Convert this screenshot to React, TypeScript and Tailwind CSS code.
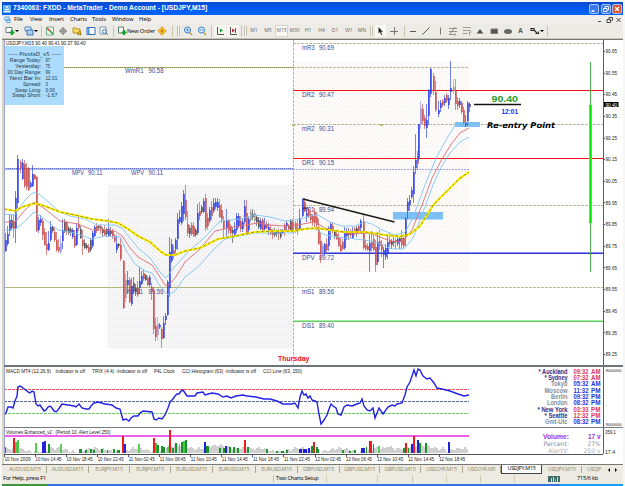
import React from "react";

const SANS = '"Liberation Sans", Arial, sans-serif';
const NARROW = '"Liberation Sans Narrow", "Liberation Sans", Arial, sans-serif';
const UI = '"Open Sans", "Noto Sans", sans-serif';
const WIDE = '"DejaVu Sans", Verdana, sans-serif';

type LabelProps = {
  x: number;
  y: number;
  w: number;
  s: number;
  c?: string;
  f?: string;
  b?: boolean;
  i?: boolean;
  end?: boolean;
  children: string;
};

/** Chart label whose advance is fixed to w pixels. */
function Label({ x, y, w, s, c = "#33334d", f = UI, b, i, end, children }: LabelProps) {
  return (
    <text
      x={end ? x - w : x}
      y={y}
      fontSize={s}
      fill={c}
      textLength={w}
      lengthAdjust="spacingAndGlyphs"
      fontFamily={f}
      fontWeight={b ? 700 : 400}
      fontStyle={i ? "italic" : "normal"}
    >
      {children}
    </text>
  );
}

/* x, high, low, body top, body bottom, colour key */
const CANDLES = `
5 233 252 240 251 b;7 226 246 234 244 b;9 215 236 220 231 b;11 215 230 220 228 k;13 214 238 221 229 r;15 191 243 198 228 b;
17 155 209 159 203 b;20 160 173 162 168 r;22 159 180 163 179 b;24 160 188 164 186 r;26 163 190 168 187 r;28 167 191 168 190 r;30 181 188 183 187 b;32 165 187 174 186 b;34 174 180 175 179 r;36 176 232 177 231 r;
38 217 233 220 230 b;40 215 226 219 223 b;42 218 240 221 235 r;44 228 246 232 245 r;46 232 255 244 250 r;48 231 251 243 250 b;50 221 242 227 240 b;52 225 233 227 231 k;54 228 242 232 240 r;56 232 252 240 250 r;58 239 253 247 251 r;60 236 254 243 252 l;62 219 249 230 241 b;
64 219 233 222 232 k;66 221 235 222 231 r;68 226 235 228 233 k;70 227 236 229 233 k;72 228 239 230 237 b;74 230 248 236 246 r;76 223 246 228 245 b;78 216 231 224 228 r;80 226 239 229 238 k;82 230 255 240 246 r;84 239 249 243 248 k;86 243 250 245 248 k;88 244 253 247 252 r;90 238 252 240 250 k;
92 231 248 233 246 b;94 225 237 227 236 b;96 223 233 226 231 r;98 225 230 226 228 k;100 224 234 226 229 r;102 227 237 229 233 k;104 225 236 230 235 r;106 228 237 229 234 k;108 219 237 229 236 b;110 227 236 231 234 k;112 229 239 231 237 r;114 234 243 237 241 r;116 235 253 244 250 b;118 243 248 244 246 k;120 238 261 245 259 r;
123 260 309 261 308 r;125 274 302 280 298 g;127 271 293 280 285 b;129 277 303 280 302 r;131 278 306 286 304 b;133 277 294 283 291 k;135 284 296 288 292 k;137 281 297 288 295 r;139 267 294 281 288 b;141 271 285 276 284 b;143 269 281 273 279 r;145 274 281 275 280 k;147 276 286 278 285 r;149 275 287 277 285 b;151 283 300 287 292 r;153 287 334 291 329 r;155 318 341 326 337 r;157 317 340 324 335 l;
159 323 329 325 327 b;161 327 348 329 339 r;163 316 339 323 338 b;165 313 325 316 320 b;167 280 316 282 315 b;169 237 297 252 288 b;171 239 263 244 261 b;173 245 259 250 254 r;175 238 253 240 249 b;177 213 250 219 239 b;179 210 224 217 222 b;181 202 225 206 223 b;183 190 221 194 214 b;185 185 220 200 217 r;187 211 236 224 233 r;189 225 238 228 234 k;
191 222 236 225 234 r;193 222 237 226 236 r;195 228 237 230 235 k;197 204 235 213 233 b;199 202 220 211 216 r;201 205 214 207 212 k;203 198 213 201 212 b;205 194 231 198 228 r;207 213 230 218 226 r;209 207 223 210 221 b;211 201 220 207 216 r;213 198 213 203 211 b;215 198 209 202 207 b;217 198 211 202 208 b;219 199 218 205 217 r;221 204 223 210 219 r;223 216 238 220 229 r;
226 209 237 220 228 b;228 219 234 220 231 r;230 224 236 226 233 r;232 228 243 230 233 k;234 222 237 229 236 b;236 213 233 216 230 b;238 213 228 216 226 b;240 216 232 221 229 r;242 219 232 222 229 b;244 200 224 206 222 b;246 200 234 213 233 r;248 217 233 219 230 b;250 209 222 212 220 g;252 209 220 214 217 k;254 210 224 213 221 g;256 215 226 217 222 k;
258 217 229 220 227 k;260 218 230 221 229 b;262 218 232 220 230 r;264 218 231 225 229 b;266 221 229 224 228 r;268 223 235 227 232 b;270 225 235 229 234 r;272 229 239 231 235 r;274 228 237 230 235 k;276 230 237 231 234 k;278 229 240 231 234 r;280 229 239 231 237 k;282 229 234 230 233 b;284 223 236 225 232 r;286 221 232 223 226 b;288 224 231 226 229 r;290 219 231 221 230 k;292 219 231 222 229 r;
295 221 233 223 231 r;297 220 235 228 231 r;299 209 231 218 230 b;302 198 217 200 216 b;304 198 212 202 211 r;306 209 222 213 217 b;308 208 218 210 216 r;310 210 223 214 220 r;312 214 226 216 222 r;314 208 228 212 223 r;316 212 230 217 225 r;318 219 245 227 244 r;320 233 263 241 254 r;322 243 257 246 255 l;324 243 255 244 252 b;326 238 252 244 250 r;328 226 251 228 246 b;330 222 240 224 230 b;
332 222 234 226 231 r;334 230 239 231 236 k;336 232 240 234 239 r;338 233 247 238 246 r;340 237 252 245 251 r;342 239 250 242 249 r;344 227 250 231 248 b;346 228 240 232 236 b;348 228 240 231 235 k;350 229 238 231 235 r;352 227 239 231 238 b;354 227 235 229 233 r;356 226 237 228 231 k;358 225 233 226 231 r;360 219 231 221 228 b;363 213 250 221 248 r;365 240 251 245 249 r;367 243 251 246 250 r;369 233 272 243 251 b;371 231 251 241 248 r;373 235 251 239 250 r;
375 240 272 247 265 r;377 232 265 242 262 b;379 230 250 241 246 r;381 240 257 244 250 r;383 247 268 250 255 b;385 244 260 248 257 b;387 235 259 242 254 b;389 233 247 240 244 r;391 239 249 241 245 k;393 235 247 241 243 k;395 238 249 240 242 r;397 235 246 239 244 b;399 237 249 238 242 k;401 230 249 238 245 r;403 234 248 238 246 r;405 217 246 219 237 b;407 198 219 202 211 b;409 195 211 200 205 b;411 187 199 190 197 b;413 166 203 172 194 b;415 134 174 160 168 b;
417 151 170 156 164 r;418 124 161 124 159 b;420 101 129 108 124 l;422 104 124 109 121 r;424 115 129 118 126 r;426 104 138 120 128 b;428 89 125 90 116 b;430 68 97 69 94 b;433 73 95 76 91 r;435 81 112 92 110 r;438 101 117 110 114 b;440 100 112 103 108 b;442 99 107 101 105 r;444 95 106 98 103 b;446 93 103 95 101 r;448 95 109 98 105 b;450 61 100 88 92 b;453 79 94 87 91 g;455 79 110 91 104 r;457 97 110 101 106 r;459 98 108 101 105 b;461 101 114 103 112 r;463 107 125 110 123 r;465 115 127 122 125 b;467 101 126 103 121 b;469 102 112 104 107 k`
  .trim()
  .split(";")
  .map((row) => {
    const p = row.trim().split(" ");
    return { x: +p[0], h: +p[1], l: +p[2], t: +p[3], b: +p[4], c: p[5] };
  });

const CANDLE_COLORS: Record<string, string> = {
  b: "#2a3fe8",
  r: "#c84b4b",
  k: "#4c4850",
  g: "#9a9a94",
  l: "#9393ef",
};

const UPPER =
  "4,214 15,215 25,200 31,194 36,192 45,199 60,212 70,216 85,219 97,225 115,225 122,228 130,238 138,248 150,258 160,272 166,278 175,266 190,250 205,237 220,221 232,220 240,219 255,215 270,217 285,221 300,219 310,216 318,215 330,222 342,226 355,226 364,222 372,224 382,230 395,235 405,232 412,220 418,204 425,185 436,158 446,140 455,125 469,122";
const MIDDLE =
  "4,222 15,222 25,210 34,202 45,209 60,221 78,224 92,230 105,230 115,231 122,236 130,248 138,257 152,265 158,274 165,285 168,286 175,278 185,262 200,249 215,231 228,228 240,226 258,223 270,225 285,226 298,225 308,223 315,222 325,228 340,232 350,234 370,233 382,238 395,242 403,241 412,230 422,205 432,178 442,159 452,143 460,133 469,128";
const LOWER =
  "4,230 15,230 25,221 34,212 42,217 58,230 75,233 92,239 105,236 120,237 126,250 135,264 145,271 152,273 160,286 168,295 175,291 185,277 198,267 213,250 225,239 240,236 255,233 275,233 290,233 308,228 315,229 325,235 345,238 365,240 378,243 392,249 404,249 413,238 420,220 426,204 433,185 440,169 450,153 460,142 469,137";
const SLOW =
  "4,209 15,211 22,207 34,203.5 42,205 60,212 75,215 92,219 108,221 118,223 128,229 138,236 150,242 160,251 166,255 175,255 185,251 200,248 218,239 235,236 255,232 275,231 293,231 305,229 315,228 330,230 345,232 365,232 385,235 400,236.5 410,234 420,226 434,204 448,190 459,179 469,172";

const PIVOTS: { y: number; t: string; v: string }[] = [
  { y: 49.5, t: "mR3", v: "90.69" },
  { y: 97, t: "DR2", v: "90.47" },
  { y: 131, t: "mR2", v: "90.31" },
  { y: 165, t: "DR1", v: "90.15" },
  { y: 212, t: "mP1", v: "89.94" },
  { y: 259.5, t: "DPV", v: "89.72" },
  { y: 293.5, t: "mS1", v: "89.56" },
  { y: 327.5, t: "DS1", v: "89.40" },
];

const INFO: [string, string][] = [
  ["Range Today:", "97"],
  ["Yesterday:", "75"],
  ["30 Day Range:", "99"],
  ["Next Bar In:", "12.01"],
  ["Spread:", "3"],
  ["Swap Long:", "0.00"],
  ["Swap Short:", "-1.67"],
];

function PriceChart() {
  return (
    <g>
      <defs>
        <pattern id="session" width="4" height="4" patternUnits="userSpaceOnUse">
          <rect width="4" height="4" fill="#f8f7f7" />
          <rect x="0" y="1" width="1" height="1" fill="#e4e2e6" />
          <rect x="2" y="3" width="1" height="1" fill="#e4e2e6" />
        </pattern>
        <pattern id="today" width="5" height="5" patternUnits="userSpaceOnUse">
          <rect width="5" height="5" fill="#fcfbfa" />
          <rect x="1" y="1" width="1" height="1" fill="#f2ebe6" />
          <rect x="3" y="3" width="1" height="1" fill="#f4f0ec" />
        </pattern>
      </defs>
      <rect x="108" y="185" width="185" height="163" fill="url(#session)" />
      <rect x="293" y="62" width="176" height="210" fill="url(#today)" />

      {/* pivot levels */}
      <g shapeRendering="crispEdges" fill="none">
        <path d="M4 67.5H293M4 287.5H293" stroke="#b5b57c" />
        <path d="M4 67.5H293" stroke="#8f8f4a" strokeDasharray="1 1" />
        <path
          d="M293 43.5H603M293 67.5H469M293 124.5H603M293 205.5H603M293 287.5H603M293.5 40V365"
          stroke="#bcbc90"
          strokeDasharray="3 1"
        />
        <path d="M4 169H293" stroke="#a9b5f5" strokeWidth="2" />
        <path d="M4 168.5H293" stroke="#6470c0" strokeDasharray="1 1" />
        <path d="M293 169.5H469" stroke="#9fa8ee" strokeDasharray="2 1" />
        <path d="M293 90.5H603M293 158.5H603" stroke="#f01414" />
        <path d="M293 252.5H603" stroke="#8d95f0" />
        <path d="M293 253.5H603" stroke="#3333d0" />
        <path d="M293 320.5H603" stroke="#a8eaa8" />
        <path d="M293 321.5H603" stroke="#62cc62" />
        <path d="M292 124h2v1h-2zM380 124h2v1h-2z" stroke="#b9b97e" />
      </g>
      <rect x="393" y="212" width="50" height="7.5" fill="#7cc0f6" />
      <rect x="455" y="122" width="25" height="5" fill="#7cc0f6" />

      {/* level names */}
      {PIVOTS.map((p) => (
        <g key={p.t}>
          <Label x={302} y={p.y} w={12.5} s={6.4} c="#3d4698" f={SANS}>{p.t}</Label>
          <Label x={319} y={p.y} w={15} s={6.4} c="#3d4698" f={SANS}>{p.v}</Label>
        </g>
      ))}
      <Label x={125} y={73} w={18.5} s={6.4} c="#3d4698" f={SANS}>WmR1</Label>
      <Label x={148.5} y={73} w={15} s={6.4} c="#3d4698" f={SANS}>90.58</Label>
      <Label x={72} y={175} w={12} s={6.4} c="#3d4698" f={SANS}>MPV</Label>
      <Label x={88} y={175} w={14.5} s={6.4} c="#3d4698" f={SANS}>90.11</Label>
      <Label x={131} y={175} w={13} s={6.4} c="#3d4698" f={SANS}>WPV</Label>
      <Label x={148.5} y={175} w={14.5} s={6.4} c="#3d4698" f={SANS}>90.11</Label>
      <Label x={126} y={293.5} w={17} s={6.4} c="#3d4698" f={SANS}>WmS1</Label>
      <Label x={148.5} y={293.5} w={15} s={6.4} c="#3d4698" f={SANS}>89.56</Label>

      {/* candles */}
      <g shapeRendering="crispEdges">
        {CANDLES.map((k) => (
          <g key={k.x} fill={CANDLE_COLORS[k.c]}>
            <rect x={k.x} y={k.h} width={1} height={k.l - k.h} fillOpacity={0.65} />
            <rect x={k.x} y={k.t} width={2} height={Math.max(1, k.b - k.t)} fillOpacity={0.72} />
          </g>
        ))}
      </g>

      {/* moving averages */}
      <g fill="none" strokeLinejoin="round">
        <polyline points={UPPER} stroke="#7fc4f4" strokeWidth="0.9" />
        <polyline points={LOWER} stroke="#7fc4f4" strokeWidth="0.9" />
        <polyline points={MIDDLE} stroke="#e06a72" strokeWidth="0.9" />
        <polyline points={SLOW} stroke="#fff000" strokeWidth="2.2" />
        <polyline points={SLOW} stroke="#77701a" strokeWidth="0.7" strokeDasharray="3 2" />
        <path d="M303 199L394.5 222" stroke="#1b1b1b" strokeWidth="1.3" />
        <path d="M303 208h5" stroke="#1b1b1b" />
      </g>

      {/* price tags */}
      <path d="M474 104.5H521" stroke="#111" strokeWidth="1.4" />
      <Label x={491.5} y={102} w={26.5} s={9.6} c="#2a9a2a" b f={SANS}>90.40</Label>
      <Label x={501.5} y={113.5} w={16.5} s={6.8} c="#2424e8" b f={SANS}>12:01</Label>
      <Label x={487} y={127.5} w={68} s={7.8} c="#000" b i f={WIDE}>Re-entry Point</Label>
      <Label x={278} y={361} w={31.5} s={6.4} c="#f01020" b f={SANS}>Thursday</Label>
      <g shapeRendering="crispEdges">
        <rect x="590" y="62" width="1" height="210" fill="#4eaa4e" />
        <rect x="589" y="105" width="3" height="118" fill="#44f044" />
        <rect x="590" y="105" width="1" height="118" fill="#00e400" />
      </g>

      {/* status text and indicator box */}
      <rect x="5" y="46" width="59" height="59" fill="#abdcfc" />
      <Label x={6} y={45.3} w={79.5} s={5.6} c="#111" f={NARROW}>USDJPY,M15 90.40 90.41 90.37 90.40</Label>
      <Label x={7.5} y={56.3} w={54} s={5.4} c="#22384c" f={WIDE}>----- PivotsD_v5 -----</Label>
      {INFO.map(([name, value], n) => {
        const width = name.length * 2.65;
        return (
          <g key={name}>
            <Label x={41.5} y={62.3 + n * 5.85} w={width} s={5.2} c="#22384c" f={SANS} end>{name}</Label>
            <Label x={45.5} y={62.3 + n * 5.85} w={value.length * 2.35} s={5.2} c="#22384c" f={SANS}>{value}</Label>
          </g>
        );
      })}
    </g>
  );
}

const OSC =
  "4,415 6,413 8,407 11,407 13,408 15,401 17,396 18,387 20,386 22,387 24,389 26,390 28,392 30,393 32,391 34,392 36,404 38,406 40,405 42,408 44,411 46,410 48,407 50,406 52,408 54,411 56,412 58,410 60,407 62,404 68,405 74,406 76,407 79,404 82,408 86,409 89,409 91,406 94,403 98,402 105,404 112,405 116,408 120,409 123,420 126,419 129,421 131,418 134,416 138,416 140,413 143,411 152,412 154,419 156,420 159,418 162,419 165,415 168,408 170,402 173,399 175,396 177,394 179,394 181,391 183,390 185,393 187,396 195,396 197,393 203,392 205,395 212,393 218,394 223,397 227,396 231,398 236,396 243,395 247,396 256,397 264,399 270,399 277,401 283,404 292,404 295,403 298,408 300,397 302,391 304,395 306,394 308,398 310,396 312,400 315,401 317,402 319,414 321,424 324,420 327,415 329,409 331,404 333,406 336,408 338,414 341,415 344,407 347,405 352,406 357,404 360,403 362,399 364,406 367,410 370,411 373,408 375,418 379,408 383,414 388,407 392,405 395,406 397,404 402,403 405,395 407,387 410,382 413,373 414,370 416,376 418,369 420,370 423,376 427,379 430,378 434,383 437,388 442,389 450,391 458,394 464,396 469,395";

const CLOCKS: { city: string; time: string; half: string; w: number; red?: boolean }[] = [
  { city: "* Auckland", time: "09:32", half: "AM", w: 29, red: true },
  { city: "* Sydney", time: "07:32", half: "AM", w: 23, red: true },
  { city: "Tokyo", time: "05:32", half: "AM", w: 16.5 },
  { city: "Moscow", time: "11:32", half: "PM", w: 23 },
  { city: "Berlin", time: "09:32", half: "PM", w: 16.5 },
  { city: "London", time: "08:32", half: "PM", w: 20.5 },
  { city: "* New York", time: "03:33", half: "PM", w: 30, red: true },
  { city: "* Seattle", time: "12:32", half: "PM", w: 23, red: true },
  { city: "Gmt-Utc", time: "08:32", half: "PM", w: 22.5 },
];

function Oscillator() {
  return (
    <g>
      <g fill="none" shapeRendering="crispEdges" strokeDasharray="3 1">
        <path d="M4 389.5H469" stroke="#e0505c" />
        <path d="M4 401.5H469" stroke="#5c6c98" />
        <path d="M4 413.5H469" stroke="#74c874" />
      </g>
      <polyline points={OSC} fill="none" stroke="#2222e4" strokeWidth="1.4" />
      <Label x={6} y={373} w={45} s={5.2} c="#222" f={NARROW}>MACD MT4 (12,26,9)</Label>
      <Label x={55.5} y={373} w={29.5} s={5.2} c="#222" f={NARROW}>Indicator is off</Label>
      <Label x={92} y={373} w={55} s={5.2} c="#222" f={NARROW}>TRIX (4,4) -Indicator is off</Label>
      <Label x={154} y={373} w={20.5} s={5.2} c="#222" f={NARROW}>P4L Clock</Label>
      <Label x={182} y={373} w={74} s={5.2} c="#222" f={NARROW}>CCI Histogram (63) -Indicator is off</Label>
      <Label x={263} y={373} w={39} s={5.2} c="#222" f={NARROW}>CCI Line (63, 150)</Label>
      {CLOCKS.map((k, n) => {
        const y = 373.8 + n * 6.33;
        const tone = k.red ? "#e03456" : "#2c34e0";
        return (
          <g key={k.city}>
            <Label x={567.5} y={y} w={k.w} s={6.3} c={k.red ? "#27308c" : "#84909c"} f={SANS} b end>{k.city}</Label>
            <Label x={573.5} y={y} w={15} s={6.3} c={tone} b f={SANS}>{k.time}</Label>
            <Label x={591} y={y} w={9.5} s={6.3} c={tone} b f={SANS}>{k.half}</Label>
          </g>
        );
      })}
    </g>
  );
}

/* x, height, colour, width */
const SPIKES: [number, number, string, number][] = [
  [4, 6, "#1a9a2a", 2], [13, 15, "#ee1c1c", 2], [15, 11, "#4ac84a", 2], [17, 13, "#4ac84a", 2], [35, 10, "#55d055", 2],
  [42, 11, "#2222dd", 2], [44, 12, "#2222dd", 2], [48, 9, "#18922a", 2], [60, 9, "#55d055", 2], [79, 4, "#18922a", 3],
  [85, 3, "#18922a", 2], [90, 4, "#18922a", 2], [93, 3, "#18922a", 2], [101, 4, "#18922a", 2], [107, 3, "#18922a", 1], [113, 4, "#18922a", 2], [117, 3, "#18922a", 3],
  [122, 17, "#ee1c1c", 2], [124, 9, "#2222dd", 2], [138, 9, "#55d055", 2], [153, 15, "#ee1c1c", 2], [155, 10, "#35b835", 2], [157, 8, "#18922a", 2],
  [161, 7, "#18922a", 2], [163, 6, "#18922a", 2], [167, 6, "#55d055", 2], [169, 23, "#ee1c1c", 2], [172, 5, "#18922a", 2], [175, 10, "#18922a", 2], [179, 9, "#55d055", 1],
  [181, 11, "#18922a", 2], [183, 12, "#4ac84a", 2], [185, 13, "#18922a", 2], [204, 11, "#2222dd", 2], [206, 7, "#18922a", 3], [219, 5, "#18922a", 2], [223, 5, "#18922a", 2], [225, 7, "#2222dd", 2],
  [229, 6, "#18922a", 2], [233, 6, "#18922a", 2], [237, 5, "#18922a", 2], [244, 13, "#ee1c1c", 2], [247, 6, "#18922a", 2], [266, 4, "#18922a", 2], [276, 2, "#18922a", 2], [281, 2, "#18922a", 3], [286, 3, "#18922a", 2],
  [299, 4, "#2222dd", 3], [303, 4, "#2222dd", 4], [308, 5, "#2222dd", 2], [311, 7, "#18922a", 2], [313, 11, "#ee1c1c", 2], [316, 6, "#18922a", 2], [318, 4, "#18922a", 1], [342, 3, "#18922a", 2], [349, 2, "#18922a", 2], [354, 3, "#18922a", 2],
  [361, 5, "#2222dd", 4], [366, 6, "#18922a", 1], [369, 12, "#ee1c1c", 3], [373, 9, "#18922a", 1], [378, 7, "#55d055", 2], [403, 5, "#18922a", 2], [405, 10, "#ee1c1c", 2], [408, 5, "#18922a", 1], [411, 9, "#2222dd", 2], [413, 17, "#ee1c1c", 2], [417, 13, "#2222dd", 2], [419, 10, "#18922a", 2], [425, 10, "#18922a", 2], [448, 11, "#2222dd", 2],
];

const BACKGROUND_BARS = Array.from({ length: 232 }, (_, n) => {
  const x = 4 + n * 2;
  const busy = (x > 165 && x < 250) || (x > 385 && x < 445) ? 3 : 0;
  return { x, h: 3 + busy + Math.round(1.8 * Math.sin(n * 0.31) + 1.3 * Math.sin(n * 1.7)) };
});

const TIMES = ["10 Nov 2009", "10 Nov 14:45", "10 Nov 18:45", "10 Nov 22:45", "11 Nov 02:45", "11 Nov 06:45", "11 Nov 10:45", "11 Nov 14:45", "11 Nov 18:45", "11 Nov 22:45", "12 Nov 02:45", "12 Nov 06:45", "12 Nov 10:45", "12 Nov 14:45", "12 Nov 18:45"];

function Volumes() {
  return (
    <g>
      <g shapeRendering="crispEdges">
        {BACKGROUND_BARS.map((k) => (
          <rect key={k.x} x={k.x} y={453 - k.h} width={1.5} height={k.h} fill="#cfcfcf" />
        ))}
        <rect x="4" y="435" width="465" height="2" fill="#f060f0" />
        {SPIKES.map(([x, h, c, w]) => (
          <rect key={x} x={x} y={453 - h} width={w} height={h} fill={c} />
        ))}
      </g>
      <Label x={6} y={434.3} w={46} s={5.2} c="#222" f={NARROW}>Volumes Enhanced_v2</Label>
      <Label x={55.5} y={434.3} w={55} s={5.2} c="#222" f={NARROW}>(Period 10, Alert Level 250)</Label>
      <Label x={569} y={439} w={26} s={6.4} c="#a52ae0" b f={SANS} end>Volume:</Label>
      <Label x={600.5} y={439} w={12.5} s={6.4} c="#a52ae0" b f={SANS} end>17 v</Label>
      <Label x={569} y={446} w={25.5} s={6.2} c="#8a8a90" f={WIDE} end>Percent:</Label>
      <Label x={600.5} y={446} w={13} s={6.2} c="#8a8a90" f={WIDE} end>27%</Label>
      <Label x={569} y={452.8} w={21} s={6.2} c="#adadb4" f={WIDE} end>AlertV:</Label>
      <Label x={600.5} y={452.8} w={17} s={6.2} c="#adadb4" f={WIDE} end>250 v</Label>
    </g>
  );
}

function Axes() {
  return (
    <g>
      <g shapeRendering="crispEdges">
        <rect x="4" y="40" width="1" height="414" fill="#9ca4dc" />
        <rect x="603" y="40" width="1" height="414" fill="#5c5c64" />
        <rect x="4" y="365" width="619" height="2" fill="#6c747c" />
        <rect x="4" y="427" width="619" height="1" fill="#777b80" />
        <rect x="4" y="454" width="599" height="1" fill="#50545a" />
        {Array.from({ length: 15 }, (_, n) => (
          <rect key={n} x="604" y={51 + Math.round(n * 21.64)} width="1" height="1" fill="#555" />
        ))}
        {TIMES.map((t, n) => (
          <rect key={t} x={4 + Math.round(n * 31.05)} y="455" width="1" height="2" fill="#555" />
        ))}
      </g>
      {Array.from({ length: 15 }, (_, n) => (
        <Label key={n} x={605.5} y={53.2 + n * 21.64} w={11.5} s={5.3} c="#222" f={SANS}>{(90.65 - n * 0.1).toFixed(2)}</Label>
      ))}
      <rect x="604" y="102" width="14.5" height="5" fill="#000" />
      <Label x={605.5} y={106.5} w={11.5} s={5.3} c="#fff" f={SANS}>90.40</Label>
      <Label x={604.5} y={371.5} w={17} s={4.2} c="#222" f={NARROW}>.9000000</Label>
      <Label x={604.5} y={425.5} w={17} s={4.2} c="#222" f={NARROW}>.9000000</Label>
      <Label x={605} y={433.5} w={11} s={5.2} c="#222" f={NARROW}>359.1</Label>
      <Label x={605} y={453.5} w={10} s={5.2} c="#222" f={NARROW}>17.4</Label>
      {TIMES.map((t, n) => (
        <Label key={t} x={4.5 + n * 31.05} y={461} w={26} s={5.2} c="#222" f={NARROW}>{t}</Label>
      ))}
    </g>
  );
}

function Chart() {
  return (
    <svg viewBox="2 40 621 424" className="block h-[424px] w-[621px] bg-white">
      <rect x="2" y="40" width="2" height="424" fill="#d8d4c4" />
      <PriceChart />
      <Oscillator />
      <Volumes />
      <Axes />
    </svg>
  );
}

function Icon({ children }: { children: React.ReactNode }) {
  return (
    <svg viewBox="0 0 10 10" className="h-[10px] w-[10px] shrink-0" fill="none">
      {children}
    </svg>
  );
}

/** Toolbar slot: w is the distance to the next slot. */
function Slot({ w, children }: { w: number; children?: React.ReactNode }) {
  return (
    <div className="flex h-[12px] shrink-0 items-center justify-center" style={{ width: w }}>
      {children}
    </div>
  );
}

const Sep = () => <div className="h-[11px] w-px bg-[#c9c5ae]" />;
const Grip = () => <div className="h-[10px] w-[3px] border-x border-[#c4c0b0] bg-[#f7f6f0]" />;
const Caret = () => <div className="h-0 w-0 border-x-2 border-t-2 border-x-transparent border-t-black" />;
const Plus = () => <path d="M7 4v5M4.5 6.5h5" stroke="#18a028" strokeWidth="2" />;

function Period({ t, on }: { t: string; on?: boolean }) {
  return (
    <span className={"flex h-[12px] w-[13px] items-center justify-center text-[5px] text-[#666] " + (on ? "border border-[#d8d4c8] bg-[#f9f8f4]" : "")}>
      {t}
    </span>
  );
}

function Toolbar() {
  return (
    <div className="flex h-[14px] items-center bg-[#edebe6] pl-[3px]">
      <Slot w={14}><Icon><path d="M1 1.5h6v5H1z" fill="#fff" stroke="#667c88" /><Plus /></Icon><Caret /></Slot>
      <Slot w={4} />
      <Slot w={15}><Icon><path d="M1 1h6v4H1z" fill="#d9edff" stroke="#5284b8" /><path d="M3 4h6v5H3z" fill="#a9d0f6" stroke="#3b74b4" /></Icon><Caret /></Slot>
      <Slot w={6}><Sep /></Slot>
      <Slot w={12}><Icon><path d="M1.5 1h7v8h-7z" fill="#e9f6e6" stroke="#6fae8c" /><path d="M2 2l3 3" stroke="#e03030" strokeWidth="1.5" /><path d="M5 5l3 3" stroke="#30a040" strokeWidth="1.5" /></Icon></Slot>
      <Slot w={14}><Icon><circle cx="5" cy="5" r="2.500" stroke="#777" /><path d="M5 1v8M1 5h8" stroke="#777" /></Icon></Slot>
      <Slot w={14}><Icon><path d="M1 2h3l1 1h3v4H1z" fill="#f8d860" stroke="#b89020" /><path d="M5 8l3-3 1 4z" fill="#f6c020" stroke="#a07a10" /></Icon></Slot>
      <Slot w={13}><Icon><path d="M1 1.5h8v7H1z" fill="#fff" stroke="#2c6cc0" /><path d="M1.5 2h2v6h-2z" fill="#4c94e8" /></Icon></Slot>
      <Slot w={14}><Icon><path d="M1 1h6v7H1z" fill="#f4f8ff" stroke="#7c98b8" /><circle cx="5.5" cy="5.5" r="2" stroke="#4c7cac" /><path d="M7 7l2 2" stroke="#4c7cac" /></Icon></Slot>
      <Slot w={5}><Sep /></Slot>
      <Slot w={11}><Icon><path d="M1.5 1h5v6h-5z" fill="#fff" stroke="#5c7c6c" /><Plus /></Icon></Slot>
      <Slot w={28}><span className="whitespace-nowrap text-[5.7px] tracking-[-0.15px] text-black">New Order</span></Slot>
      <Slot w={14}><Icon><path d="M5 .8L9.200 5 5 9.200.8 5z" fill="#f8cc30" stroke="#dc9420" /><path d="M5 3v4M3.5 5h3" stroke="#c85c10" /></Icon></Slot>
      <Slot w={6}><Sep /></Slot>
      <Slot w={6}><Grip /></Slot>
      <Slot w={14}><Icon><circle cx="4.500" cy="4" r="3" fill="#dceeff" stroke="#3478c8" /><path d="M3 4h3M4.500 2.500v3" stroke="#3478c8" strokeWidth=".8" /><path d="M6.500 6.500L9 9" stroke="#c49c38" strokeWidth="1.500" /></Icon></Slot>
      <Slot w={13}><Icon><circle cx="4.500" cy="4" r="3" fill="#dceeff" stroke="#3478c8" /><path d="M3 4h3" stroke="#3478c8" strokeWidth=".8" /><path d="M6.500 6.500L9 9" stroke="#c49c38" strokeWidth="1.500" /></Icon></Slot>
      <Slot w={6}><Sep /></Slot>
      <Slot w={12}>
        <span className="flex h-[12px] w-[12px] items-center justify-center bg-[#f7f6f2]"><Icon><path d="M2.500 1v7.500H9" stroke="#555" /><path d="M5 2.500l3 2-3 2z" fill="#20a030" /></Icon></span>
      </Slot>
      <Slot w={13}>
        <span className="flex h-[12px] w-[12px] items-center justify-center bg-[#f7f6f2]"><Icon><path d="M2.500 1v7.500H9M7.500 2v5" stroke="#555" /><path d="M4 2.500l3 2-3 2z" fill="#b03030" /></Icon></span>
      </Slot>
      <Slot w={4}><Sep /></Slot>
      <Slot w={4}><Grip /></Slot>
      <Slot w={14}><Period t="M1" /></Slot>
      <Slot w={14}><Period t="M5" /></Slot>
      <Slot w={13}><Period t="M15" on /></Slot>
      <Slot w={13}><Period t="M30" /></Slot>
      <Slot w={14}><Period t="H1" /></Slot>
      <Slot w={13}><Period t="H4" /></Slot>
      <Slot w={14}><Period t="D1" /></Slot>
      <Slot w={14}><Period t="W1" /></Slot>
      <Slot w={12}><Period t="MN" /></Slot>
      <Slot w={7}><Grip /></Slot>
      <Slot w={11}>
        <span className="flex h-[12px] w-[11px] items-center bg-[#f9f8f4]"><Icon><path d="M3.5 1v6.500L5 6l1.200 3 1-.5L6 5.700h2z" fill="#222" /></Icon></span>
      </Slot>
      <Slot w={16}><Icon><path d="M5.500 1v8M1 5.500h8" stroke="#777" /></Icon></Slot>
      <Slot w={4}><Sep /></Slot>
      <Slot w={13}><Icon><path d="M2 5.500h6" stroke="#555" /></Icon></Slot>
      <Slot w={14}><Icon><path d="M1.500 8.500l7-7" stroke="#555" /></Icon></Slot>
      <Slot w={13}><Icon><path d="M5.500 1.500v7" stroke="#777" /></Icon></Slot>
      <Slot w={14}><Icon><path d="M1 2.500h8M1 5.500h8M1 8.500h5M2 8l5-7M7 7v3" stroke="#777" strokeWidth=".8" /></Icon></Slot>
      <Slot w={13}><Icon><path d="M1 1.500h8M1 4.500h8M1 7.500h5M7.500 6v3.500M7.500 6h2" stroke="#777" strokeWidth=".8" strokeDasharray="2 .5" /></Icon></Slot>
      <Slot w={14}><Icon><path d="M1.500 7.500L5 3l3.500 4.500z" fill="#555" /></Icon></Slot>
      <Slot w={14}><Icon><path d="M2 3h6.500v4.500H2z" fill="#555" stroke="#777" /></Icon></Slot>
      <Slot w={13}><Icon><ellipse cx="5" cy="5.500" rx="4" ry="2.500" fill="#666" /></Icon></Slot>
      <Slot w={13}><span className="text-[6.5px] font-bold text-[#555]">A</span></Slot>
      <Slot w={19}><Icon><path d="M1 2.500h3v2H1zM4 4l3 3M5.500 7.500h3v-2" stroke="#222" strokeWidth="1.100" /></Icon><Caret /></Slot>
      <Slot w={3}><Sep /></Slot>
    </div>
  );
}

const MENUS: [string, number][] = [["File", 16], ["View", 19], ["Insert", 21], ["Charts", 22], ["Tools", 20], ["Window", 27], ["Help", 14]];

function Tabs() {
  const items: [string, number][] = [
    ["AUDUSD,M15", 43], ["AUDUSD,M15", 42], ["EURJPY,M15", 41], ["EURJPY,M15", 41], ["EURUSD,M15", 42], ["EURUSD,M15", 43],
    ["EURUSD,M15", 42], ["GBPUSD,M15", 42], ["GBPUSD,M15", 40], ["GBPUSD,M15", 41], ["USDCHF,M15", 42], ["USDCHF,M5", 38],
  ];
  return (
    <div className="flex h-[10px] items-center overflow-hidden border-t border-[#777] bg-[#edeae2] pl-[2px] text-[5.4px] tracking-[-0.3px] text-[#8f8c6c]">
      {items.map(([t, w], n) => (
        <div key={n} className="flex h-[7px] shrink-0 items-center justify-center border-r border-[#aaa78c] leading-none" style={{ width: w }}>{t}</div>
      ))}
      <div className="flex h-[9px] w-[41px] shrink-0 items-center justify-center border-x border-b border-[#444] bg-white leading-none text-black">USDJPY,M15</div>
      <div className="flex h-[7px] w-[40px] shrink-0 items-center justify-center border-r border-[#aaa78c] leading-none">USDJPY,M15</div>
      <div className="flex h-[7px] w-[24px] shrink-0 items-center pl-[5px] leading-none">USDJP</div>
      <div className="flex items-center gap-[5px] pl-[2px]">
        <div className="h-0 w-0 border-y-2 border-r-2 border-y-transparent border-r-black" />
        <div className="h-0 w-0 border-y-2 border-l-2 border-y-transparent border-l-black" />
      </div>
    </div>
  );
}

function StatusBar() {
  return (
    <div className="flex h-[10px] items-center bg-[#edeae2] text-[5.7px] leading-none tracking-[-0.25px] text-black">
      <div className="w-[271px] pl-[1px]">For Help, press F1</div>
      <div className="flex h-[8px] w-[53px] items-center border-l border-[#cbc7ac] pl-[2px] whitespace-nowrap">Two Charts Setup</div>
      {[51, 35, 34, 34, 34, 34].map((w, n) => (
        <div key={n} className="h-[8px] border-l border-[#cfcbb4]" style={{ width: w }} />
      ))}
      <div className="flex h-[6px] w-[12px] items-end justify-center gap-px bg-[#3c6c68] px-[1px]">
        <div className="h-[4px] w-px bg-[#b8f090]" />
        <div className="h-[5px] w-px bg-[#b8f090]" />
        <div className="h-[3px] w-px bg-[#78b8e0]" />
        <div className="h-[5px] w-px bg-[#b8f090]" />
      </div>
      <div className="pl-[17px]">715/6 kb</div>
    </div>
  );
}

function WindowButton({ kind }: { kind: "min" | "max" | "close" }) {
  const tone = kind === "close" ? "bg-[#e2522c]" : "bg-[#3c78ea]";
  return (
    <div className={"flex h-[10px] w-[10px] items-center justify-center rounded-[2px] border border-[#a8c4fa] " + tone}>
      <svg viewBox="0 0 8 8" className="h-[8px] w-[8px]" fill="none" stroke="#fff">
        {kind === "min" && <path d="M1.500 6h3" strokeWidth="1.500" />}
        {kind === "max" && <path d="M3 3V1.500h3.500V5H5M1.500 3.500H5v3H1.500z" strokeWidth=".9" />}
        {kind === "close" && <path d="M2 2l4 4M6 2L2 6" strokeWidth="1.300" />}
      </svg>
    </div>
  );
}

export default function App() {
  return (
    <div className="h-[486px] w-[625px] overflow-hidden bg-[#f7f7f7] pt-[2px] pl-[2px] font-['Open_Sans','Noto_Sans',sans-serif]">
      <div className="flex w-[621px] flex-col">
        <header className="flex h-[13px] items-center bg-linear-to-b from-[#0a4cd0] via-[#0058ee] to-[#0464f8] pr-[1px] pl-[1px]">
          <svg viewBox="0 0 8 8" className="h-[8px] w-[8px]" fill="none">
            <path d="M0 0h8v8H0z" fill="#6cb4f4" />
            <path d="M4 1v2M1 6.500h6M2 4.500h4" stroke="#fff" strokeWidth="1.200" />
          </svg>
          <h1 className="grow pl-[2px] font-['Liberation_Sans',Arial,sans-serif] text-[6.7px] leading-none font-bold whitespace-nowrap text-white">
            7340063: FXDD - MetaTrader - Demo Account - [USDJPY,M15]
          </h1>
          <div className="flex gap-[1.500px]">
            <WindowButton kind="min" />
            <WindowButton kind="max" />
            <WindowButton kind="close" />
          </div>
        </header>
        <nav className="flex h-[9px] items-center bg-[#f0eeea] pl-[2px] text-[5.8px] leading-none tracking-[-0.1px] text-black">
          <svg viewBox="0 0 8 8" className="mr-[3px] h-[8px] w-[7px]" fill="#dff0ff" stroke="#5c9cdc">
            <path d="M1 .5h5v4H1zM3 3h4v4H3z" />
          </svg>
          {MENUS.map(([t, w]) => (
            <span key={t} style={{ width: w }}>{t}</span>
          ))}
          <span className="grow" />
          <svg viewBox="0 0 28 8" className="h-[8px] w-[28px]" fill="none" stroke="#333">
            <path d="M3 5.500h3M14 3V1.500h3.500V4.500h-1M12 3.500h3.500v3H12zM21.500 2l4 4M25.500 2l-4 4" strokeWidth=".9" />
          </svg>
        </nav>
        <Toolbar />
        <div className="h-[2px] border-t border-[#c8c7ab] bg-[#77797c]" />
        <Chart />
        <Tabs />
        <StatusBar />
        <footer className="flex h-[2px] bg-[#3374dc]">
          <div className="h-[2px] w-[46px] bg-[#3f9440]" />
          <div className="grow" />
          <div className="h-[2px] w-[63px] bg-[#1c9cec]" />
        </footer>
      </div>
    </div>
  );
}
